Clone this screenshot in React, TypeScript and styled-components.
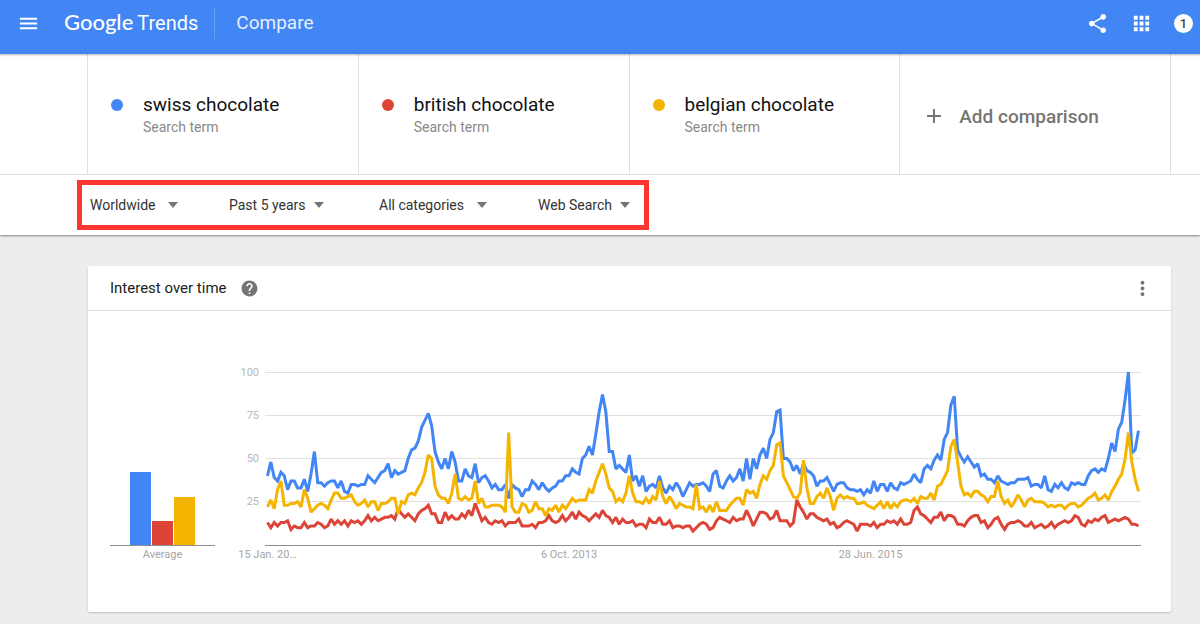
import React from "react";
import styled, { createGlobalStyle } from "styled-components";
import { MdAdd, MdApps, MdHelp, MdMenu, MdMoreVert, MdShare } from "react-icons/md";

const BLUE = "#4285f4";
const RED = "#db4437";
const YELLOW = "#f4b400";

const GlobalStyle = createGlobalStyle`
  *, *::before, *::after { box-sizing: border-box; }
  body {
    margin: 0;
    background: #ededed;
    color: #212121;
    font-family: Roboto, "Liberation Sans", sans-serif;
  }
  button, input, select { font: inherit; color: inherit; }
`;

/* ---------- header ---------- */

const Header = styled.header`
  position: relative;
  z-index: 1;
  display: flex;
  align-items: center;
  height: 54px;
  padding: 0 7px 8px 17px;
  background: ${BLUE};
  color: #fff;
  box-shadow: 0 1px 2px rgba(0, 0, 0, 0.3);
`;

const IconButton = styled.button<{ $size?: number }>`
  display: flex;
  flex: none;
  padding: 0;
  border: 0;
  background: none;
  cursor: pointer;
  svg {
    width: ${(p) => p.$size ?? 23}px;
    height: ${(p) => p.$size ?? 23}px;
  }
`;

const Logo = styled.a`
  display: flex;
  align-items: baseline;
  gap: 4px;
  margin-left: 24px;
  padding: 0 16px 2px 0;
  color: #fff;
  font-size: 20px;
  line-height: 30px;
  text-decoration: none;
`;

const LogoGoogle = styled.span`
  font-family: Lato, sans-serif;
  font-size: 22px;
  font-weight: 500;
`;

const PageTitle = styled.h1`
  flex: 1;
  margin: 0;
  padding-left: 21px;
  border-left: 1px solid rgba(255, 255, 255, 0.2);
  color: #e6effe;
  font-size: 19px;
  font-weight: 400;
  line-height: 32px;
`;

const HeaderActions = styled.div`
  display: flex;
  align-items: center;
  gap: 21px;
`;

const Badge = styled.button`
  width: 19px;
  height: 19px;
  padding: 0;
  border: 0;
  border-radius: 50%;
  background: #fff;
  color: #424242;
  font-size: 13px;
  font-weight: 500;
  line-height: 19px;
`;

/* ---------- terms and filters ---------- */

const TopPanel = styled.section`
  background: #fff;
  box-shadow: 0 1px 2px rgba(0, 0, 0, 0.45);
`;

const TermsBar = styled.div`
  padding: 0 29px 0 87px;
  border-bottom: 1px solid #e0e0e0;
`;

const Terms = styled.div`
  display: grid;
  grid-template-columns: repeat(4, 1fr);
  min-height: 120px;
  border-right: 1px solid #e0e0e0;
`;

const Term = styled.div`
  display: flex;
  gap: 20px;
  padding: 38px 0 0 23px;
  border-left: 1px solid #e0e0e0;
`;

const Dot = styled.span<{ $color: string }>`
  flex: none;
  width: 12px;
  height: 12px;
  margin-top: 7px;
  border-radius: 50%;
  background: ${(p) => p.$color};
`;

const TermName = styled.div`
  color: #111;
  font-size: 19px;
  line-height: 26px;
`;

const TermKind = styled.div`
  color: #8a8a8a;
  font-size: 14px;
  line-height: 18px;
`;

const AddButton = styled.button`
  display: flex;
  align-items: center;
  gap: 13px;
  padding: 4px 0 0 22px;
  border: 0;
  border-left: 1px solid #e0e0e0;
  background: none;
  color: #757575;
  font-size: 19px;
  font-weight: 500;
  cursor: pointer;
  svg {
    width: 24px;
    height: 24px;
  }
`;

const FilterBar = styled.div`
  padding: 5px 77px;
`;

const Filters = styled.form`
  display: grid;
  grid-template-columns: 139px 150px 159px 1fr;
  align-items: center;
  width: 572px;
  height: 50px;
  padding-left: 8px;
  border: 5px solid #fb352f;
`;

const FilterField = styled.label`
  display: grid;
  align-items: center;
  justify-self: start;
  color: #333;
`;

const FilterSelect = styled.select<{ $gap: number }>`
  grid-area: 1 / 1;
  appearance: none;
  margin: 0;
  padding: 0 ${(p) => p.$gap + 10}px 0 0;
  border: 0;
  background: none;
  font-size: 14px;
  line-height: 20px;
`;

const Caret = styled.span`
  grid-area: 1 / 1;
  justify-self: end;
  border: 5px solid transparent;
  border-top: 6px solid #757575;
  border-bottom: 0;
  pointer-events: none;
`;

/* ---------- card ---------- */

const Main = styled.main`
  padding: 31px 29px 12px 88px;
`;

const Card = styled.section`
  background: #fff;
  border-radius: 2px;
  box-shadow: 0 1px 2px rgba(0, 0, 0, 0.2);
`;

const CardHeader = styled.header`
  display: flex;
  align-items: center;
  height: 45px;
  padding: 0 17px 0 22px;
  border-bottom: 1px solid #e0e0e0;
  color: #757575;
`;

const CardTitle = styled.h2`
  margin: 0 13px 0 0;
  color: #212121;
  font-size: 15px;
  font-weight: 400;
  line-height: 20px;
`;

const Spacer = styled.div`
  flex: 1;
`;

const CardBody = styled.div`
  display: grid;
  grid-template-columns: 105px 1fr;
  gap: 50px;
  padding: 61px 30px 40px 22px;
`;

const Bars = styled.div`
  display: flex;
  align-items: flex-end;
  justify-content: center;
  gap: 1px;
  height: 174px;
  border-bottom: 1px solid #8f8f8f;
`;

const Bar = styled.div<{ $color: string }>`
  width: 21px;
  background: ${(p) => p.$color};
`;

const AverageLabel = styled.div`
  color: #a6a6a6;
  font-size: 11px;
  line-height: 18px;
  text-align: center;
`;

const Chart = styled.svg`
  display: block;
  width: 100%;
  height: 200px;
  overflow: visible;
  font-size: 11px;
`;

/* weekly values, Jan 2012 to Jan 2017 */
const swiss = [
  40, 48, 39, 37, 42, 40, 32, 37, 37, 33, 33, 38, 31, 41, 54, 36, 36, 34, 36, 37,
  37, 33, 37, 31, 30, 35, 35, 34, 35, 35, 40, 38, 36, 39, 42, 43, 47, 39, 43, 41,
  42, 43, 50, 55, 56, 60, 68, 72, 76, 69, 54, 48, 44, 50, 44, 54, 48, 37, 37, 44,
  40, 39, 47, 36, 39, 40, 37, 33, 35, 32, 32, 35, 27, 35, 33, 32, 28, 32, 32, 37,
  35, 32, 36, 33, 31, 33, 34, 37, 37, 40, 40, 44, 42, 41, 50, 52, 57, 52, 64, 77,
  87, 77, 54, 54, 44, 46, 44, 42, 52, 37, 40, 34, 40, 31, 34, 35, 33, 40, 33, 30,
  34, 32, 36, 33, 28, 32, 36, 34, 35, 35, 36, 34, 31, 41, 43, 34, 33, 37, 40, 37,
  39, 44, 37, 50, 38, 50, 44, 52, 56, 50, 61, 65, 77, 78, 50, 50, 48, 43, 46, 41,
  47, 43, 42, 40, 34, 37, 37, 39, 35, 31, 35, 36, 36, 33, 32, 32, 31, 32, 29, 32,
  30, 37, 31, 35, 35, 31, 36, 33, 32, 36, 35, 36, 37, 41, 38, 36, 44, 46, 44, 49,
  52, 49, 61, 65, 81, 86, 55, 51, 48, 51, 48, 45, 47, 40, 41, 38, 38, 36, 40, 37,
  36, 35, 36, 36, 38, 38, 38, 39, 34, 35, 35, 33, 40, 32, 31, 35, 33, 36, 33, 32,
  36, 35, 36, 35, 35, 40, 43, 44, 42, 44, 43, 50, 59, 54, 67, 71, 84, 100, 53, 55,
  66,
];

const belgian = [
  22, 26, 21, 32, 37, 23, 23, 24, 24, 25, 22, 32, 27, 19, 21, 23, 24, 23, 21, 26,
  30, 30, 27, 27, 28, 29, 25, 23, 24, 26, 22, 25, 25, 20, 24, 24, 25, 27, 27, 18,
  25, 24, 29, 30, 29, 33, 36, 42, 52, 50, 34, 29, 27, 27, 24, 30, 41, 27, 26, 28,
  26, 27, 37, 24, 27, 22, 22, 23, 23, 23, 22, 19, 65, 22, 19, 19, 24, 23, 19, 20,
  25, 21, 21, 17, 21, 20, 23, 19, 23, 21, 24, 27, 25, 26, 26, 26, 32, 30, 37, 42,
  47, 41, 33, 31, 25, 27, 25, 30, 40, 30, 25, 25, 24, 27, 24, 28, 26, 37, 28, 24,
  28, 25, 21, 24, 23, 22, 22, 21, 35, 21, 22, 19, 23, 19, 25, 20, 20, 20, 23, 25,
  27, 27, 23, 32, 30, 31, 27, 35, 40, 38, 43, 46, 58, 59, 40, 36, 32, 28, 27, 30,
  49, 33, 24, 24, 28, 30, 27, 33, 28, 20, 27, 29, 27, 28, 27, 27, 24, 24, 25, 23,
  22, 21, 23, 25, 21, 25, 21, 24, 22, 25, 26, 26, 25, 27, 24, 28, 27, 27, 30, 26,
  34, 35, 39, 43, 57, 61, 48, 34, 29, 30, 28, 31, 31, 29, 28, 25, 28, 28, 37, 28,
  24, 26, 22, 25, 29, 26, 22, 26, 27, 25, 25, 25, 24, 22, 23, 22, 23, 23, 21, 23,
  24, 24, 22, 23, 25, 27, 28, 30, 26, 27, 29, 26, 31, 34, 38, 41, 50, 65, 48, 38,
  31,
];

const british = [
  13, 10, 13, 11, 13, 13, 14, 9, 11, 10, 10, 13, 10, 11, 11, 13, 12, 10, 11, 15,
  12, 14, 12, 14, 11, 14, 13, 14, 12, 14, 17, 14, 16, 14, 15, 16, 16, 17, 15, 21,
  18, 16, 18, 16, 14, 18, 20, 21, 23, 18, 18, 13, 13, 19, 15, 17, 15, 15, 18, 16,
  20, 17, 24, 19, 14, 16, 13, 12, 14, 13, 14, 11, 13, 13, 13, 15, 11, 11, 11, 12,
  10, 13, 13, 14, 17, 14, 13, 14, 17, 14, 16, 19, 15, 19, 17, 16, 14, 16, 18, 16,
  20, 17, 16, 13, 16, 12, 15, 13, 13, 14, 11, 12, 12, 10, 15, 13, 13, 16, 12, 12,
  14, 10, 11, 11, 10, 11, 11, 8, 10, 12, 13, 12, 9, 10, 14, 16, 15, 14, 13, 16,
  14, 15, 15, 20, 16, 11, 15, 19, 19, 18, 15, 16, 20, 14, 14, 14, 11, 13, 26, 22,
  19, 15, 18, 18, 16, 15, 14, 15, 12, 13, 10, 11, 13, 14, 13, 12, 8, 12, 12, 12,
  11, 13, 10, 12, 12, 14, 13, 14, 12, 15, 12, 12, 13, 20, 22, 18, 17, 15, 13, 16,
  16, 19, 14, 17, 17, 16, 12, 12, 11, 14, 16, 17, 17, 13, 14, 10, 12, 15, 16, 12,
  9, 12, 13, 13, 14, 13, 11, 11, 13, 10, 11, 12, 10, 11, 13, 10, 12, 13, 14, 13,
  14, 17, 16, 12, 11, 14, 13, 15, 14, 16, 17, 13, 14, 15, 14, 15, 16, 15, 12, 12,
  11,
];

const terms = [
  { name: "swiss chocolate", color: BLUE, average: 42 },
  { name: "british chocolate", color: RED, average: 14 },
  { name: "belgian chocolate", color: YELLOW, average: 28 },
];

const filters = [
  { id: "Location", value: "Worldwide", gap: 12 },
  { id: "Time range", value: "Past 5 years", gap: 8 },
  { id: "Category", value: "All categories", gap: 12 },
  { id: "Search type", value: "Web Search", gap: 8 },
];

const series = [
  { color: BLUE, values: swiss },
  { color: RED, values: british },
  { color: YELLOW, values: belgian },
];

const PLOT_W = 876;
const PLOT_H = 173;
const INSET = 2.5;

const weekX = (i: number) => INSET + (i * (PLOT_W - 2 * INSET)) / 260;
const toPoints = (values: number[]) =>
  values
    .map((v, i) => `${weekX(i).toFixed(2)},${(PLOT_H - (v * PLOT_H) / 100).toFixed(2)}`)
    .join(" ");

const dates = [
  { week: 0, text: "15 Jan. 20…" },
  { week: 90, text: "6 Oct. 2013" },
  { week: 180, text: "28 Jun. 2015" },
];

function TimeChart() {
  return (
    <Chart role="img" aria-label="Interest over time">
      {[100, 75, 50, 25].map((v) => {
        const y = Math.floor(PLOT_H - (v * PLOT_H) / 100);
        return (
          <g key={v}>
            <line x1="0" x2="100%" y1={y + 0.5} y2={y + 0.5} stroke="#e0e0e0" />
            <text x="-6" y={y + 4} textAnchor="end" fill="#b8b8b8">
              {v}
            </text>
          </g>
        );
      })}
      <line x1="0" x2="100%" y1={PLOT_H + 0.5} y2={PLOT_H + 0.5} stroke="#8f8f8f" />
      <svg
        width="100%"
        height={PLOT_H}
        viewBox={`0 0 ${PLOT_W} ${PLOT_H}`}
        preserveAspectRatio="none"
        overflow="visible"
      >
        {series.map((s) => (
          <polyline
            key={s.color}
            points={toPoints(s.values)}
            fill="none"
            stroke={s.color}
            strokeWidth="3"
            strokeLinejoin="miter"
            strokeMiterlimit="2"
            vectorEffect="non-scaling-stroke"
          />
        ))}
      </svg>
      {dates.map((d) => (
        <text
          key={d.week}
          x={`${(weekX(d.week) / PLOT_W) * 100}%`}
          y={PLOT_H + 13}
          textAnchor="middle"
          fill="#a6a6a6"
        >
          {d.text}
        </text>
      ))}
    </Chart>
  );
}

export default function App() {
  return (
    <>
      <GlobalStyle />
      <Header>
        <IconButton aria-label="Menu">
          <MdMenu color="#fff" />
        </IconButton>
        <Logo href="#">
          <LogoGoogle>Google</LogoGoogle>
          <span>Trends</span>
        </Logo>
        <PageTitle>Compare</PageTitle>
        <HeaderActions>
          <IconButton aria-label="Share">
            <MdShare color="#fff" />
          </IconButton>
          <IconButton aria-label="Apps">
            <MdApps color="#fff" />
          </IconButton>
          <Badge aria-label="1 notification">1</Badge>
        </HeaderActions>
      </Header>

      <TopPanel>
        <TermsBar>
          <Terms>
            {terms.map((t) => (
              <Term key={t.name}>
                <Dot $color={t.color} />
                <div>
                  <TermName>{t.name}</TermName>
                  <TermKind>Search term</TermKind>
                </div>
              </Term>
            ))}
            <AddButton>
              <MdAdd />
              Add comparison
            </AddButton>
          </Terms>
        </TermsBar>
        <FilterBar>
          <Filters>
            {filters.map((f) => (
              <FilterField key={f.id}>
                <FilterSelect $gap={f.gap} aria-label={f.id}>
                  <option>{f.value}</option>
                </FilterSelect>
                <Caret />
              </FilterField>
            ))}
          </Filters>
        </FilterBar>
      </TopPanel>

      <Main>
        <Card>
          <CardHeader>
            <CardTitle>Interest over time</CardTitle>
            <IconButton aria-label="Help" $size={19}>
              <MdHelp color="#757575" />
            </IconButton>
            <Spacer />
            <IconButton aria-label="More options">
              <MdMoreVert color="#757575" />
            </IconButton>
          </CardHeader>
          <CardBody>
            <div>
              <Bars>
                {terms.map((t) => (
                  <Bar
                    key={t.name}
                    $color={t.color}
                    style={{ height: `${t.average}%` }}
                  />
                ))}
              </Bars>
              <AverageLabel>Average</AverageLabel>
            </div>
            <TimeChart />
          </CardBody>
        </Card>
      </Main>
    </>
  );
}
